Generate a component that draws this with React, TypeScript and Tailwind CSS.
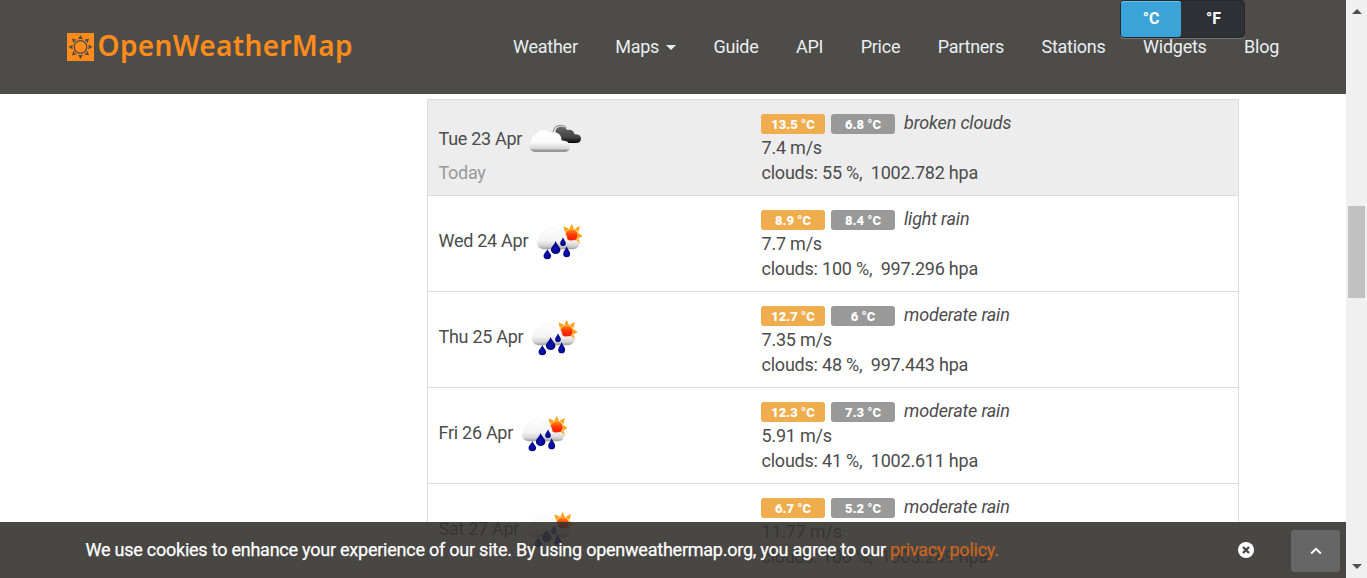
const NAV = ['Weather', 'Maps', 'Guide', 'API', 'Price', 'Partners', 'Stations', 'Widgets', 'Blog'];

type Day = {
  date: string;
  today?: boolean;
  high: string;
  low: string;
  sky: string;
  wind: string;
  clouds: string;
  pressure: string;
};

const DAYS: Day[] = [
  { date: 'Tue 23 Apr', today: true, high: '13.5', low: '6.8', sky: 'broken clouds', wind: '7.4', clouds: '55', pressure: '1002.782' },
  { date: 'Wed 24 Apr', high: '8.9', low: '8.4', sky: 'light rain', wind: '7.7', clouds: '100', pressure: '997.296' },
  { date: 'Thu 25 Apr', high: '12.7', low: '6', sky: 'moderate rain', wind: '7.35', clouds: '48', pressure: '997.443' },
  { date: 'Fri 26 Apr', high: '12.3', low: '7.3', sky: 'moderate rain', wind: '5.91', clouds: '41', pressure: '1002.611' },
  { date: 'Sat 27 Apr', high: '6.7', low: '5.2', sky: 'moderate rain', wind: '11.77', clouds: '100', pressure: '1003.249' },
];

function Gradients() {
  return (
    <svg className="absolute h-0 w-0" aria-hidden="true">
      <defs>
        <linearGradient id="cloud" x1="0" y1="0" x2="0" y2="1">
          <stop offset="0" stopColor="#ffffff" />
          <stop offset="0.55" stopColor="#fbfbfb" />
          <stop offset="0.86" stopColor="#d5d5d5" />
          <stop offset="0.94" stopColor="#999" />
          <stop offset="1" stopColor="#777" />
        </linearGradient>
        <linearGradient id="rainCloud" x1="0" y1="0" x2="0" y2="1">
          <stop offset="0" stopColor="#ffffff" />
          <stop offset="0.6" stopColor="#f4f4f4" />
          <stop offset="0.85" stopColor="#d2d2d2" />
          <stop offset="1" stopColor="#999" />
        </linearGradient>
        <linearGradient id="darkCloud" x1="0" y1="0" x2="0" y2="1">
          <stop offset="0" stopColor="#666" />
          <stop offset="0.65" stopColor="#444" />
          <stop offset="1" stopColor="#050505" />
        </linearGradient>
        <linearGradient id="sun" x1="0" y1="0" x2="0" y2="1">
          <stop offset="0" stopColor="#ff9a10" />
          <stop offset="0.45" stopColor="#ff3a08" />
          <stop offset="1" stopColor="#f01000" />
        </linearGradient>
        <radialGradient id="drop" cx="0.45" cy="0.6" r="0.6">
          <stop offset="0" stopColor="#0c12b8" />
          <stop offset="1" stopColor="#04046c" />
        </radialGradient>
      </defs>
    </svg>
  );
}

function BrokenCloudsIcon() {
  return (
    <svg viewBox="306 63 180 150" className="h-[50px] w-[60px] shrink-0">
      <path d="M384 112Q388 91 406 91Q418 90 424 99" fill="none" stroke="#999" strokeWidth="4" />
      <path d="M391 116Q389 98 406 95Q420 94 427 105Q444 102 449 118Q468 118 468 131Q467 144 453 144H430Q418 140 411 137Q406 122 391 116Z" fill="url(#darkCloud)" />
      <path d="M328 170Q313 168 313 154Q313 143 320 139Q317 123 332 120Q340 104 358 105Q370 106 377 115Q391 107 403 118Q411 126 408 137Q433 135 435 155Q435 168 421 170Z" fill="url(#cloud)" />
    </svg>
  );
}

const DROP = 'M0-1C.12-.5.95-.1.95.35A.95.65 0 0 1-.95.35C-.95-.1-.12-.5 0-1Z';

function RainIcon() {
  return (
    <svg viewBox="36 9 180 150" className="h-[50px] w-[60px] shrink-0">
      <g transform="translate(155 64)">
        <path
          d="M-7-19L0-35L7-19ZM9-20L25-28L20-9ZM19-8L33 2L19 10ZM20 9L25 25L8 20ZM-20-9L-25-27L-8-20Z"
          fill="#ffa21c"
        />
        <circle r="19" fill="url(#sun)" stroke="#ffb43c" strokeWidth="3" />
      </g>
      <path
        d="M70 106Q52 104 52 88Q51 75 62 70Q61 55 75 52Q82 39 98 40Q113 41 118 54Q132 50 138 63Q142 70 142 77Q150 82 160 79Q177 78 177 91Q176 105 160 106Z"
        fill="url(#rainCloud)"
        stroke="#e6e6e6"
        strokeWidth="1.2"
      />
      <path transform="translate(82 120) scale(12 16)" d={DROP} fill="url(#drop)" />
      <path transform="translate(107 100) scale(15 20)" d={DROP} fill="url(#drop)" />
      <path transform="translate(129 83) scale(9 13)" d={DROP} fill="url(#drop)" />
      <path transform="translate(140 113) scale(11 17)" d={DROP} fill="url(#drop)" />
    </svg>
  );
}

function Logo() {
  return (
    <svg viewBox="0 0 290 50" className="mt-[22px] ml-[67px] h-[50px] w-[290px] shrink-0">
      <rect x="0" y="11" width="27" height="28" fill="#ff8c1a" />
      <g transform="translate(13.5 25)">
        <circle r="6.3" fill="none" stroke="#4e4c48" strokeWidth="1.3" />
        {[0, 45, 90, 135, 180, 225, 270, 315].map((a) => (
          <path key={a} transform={`rotate(${a})`} d="M-2.5-7.7Q0-8.5 2.5-7.7L0-12Z" fill="#4e4c48" />
        ))}
      </g>
      <text x="30.5" y="33.5" textLength="255" fill="#ff8c1a" className="font-['Noto_Sans'] text-[28px] font-semibold">
        OpenWeatherMap
      </text>
    </svg>
  );
}

function Header() {
  return (
    <header className="absolute inset-x-0 top-0 flex h-[94px] bg-[#4e4c48]">
      <Logo />
      <nav className="ml-[156px] flex h-[92px] items-center gap-[37.45px] text-[18px] tracking-[-0.25px] text-[#e9eef2]">
        {NAV.map((item) => (
          <a key={item} className="flex items-center">
            {item}
            {item === 'Maps' && (
              <span className="mt-[3px] ml-[7px] border-x-[5px] border-t-[5px] border-x-transparent border-t-[#e9eef2]" />
            )}
          </a>
        ))}
      </nav>
      <div className="absolute top-0 left-[1120px] flex h-[38px] w-[125px] rounded-[4px] border border-[#25272b] bg-[#2d3035] text-[16px] leading-[36px] font-bold text-white shadow-[0_1px_0_#77757a]">
        <span className="w-[60px] rounded-[3px] bg-[#3aa3d8] text-center shadow-[inset_0_1px_0_#6cc0e8]">°C</span>
        <span className="flex-1 pl-[2px] text-center">°F</span>
      </div>
    </header>
  );
}

function Row({ day }: { day: Day }) {
  return (
    <div className={`flex h-[96px] shrink-0 border-b border-[#ddd] ${day.today ? 'bg-[#ededed]' : 'bg-white'}`}>
      <div className="flex w-[333px] flex-col pl-[10.5px] tracking-[-0.28px]">
        <div className={`flex items-start ${day.today ? 'mt-[16px] gap-[4.5px]' : 'mt-[21px] gap-[3.5px]'}`}>
          <span className={day.today ? 'mt-[10px]' : 'mt-[11px]'}>{day.date}</span>
          {day.today ? <BrokenCloudsIcon /> : <RainIcon />}
        </div>
        {day.today && <span className="mt-[-6px] text-[#999]">Today</span>}
      </div>
      <div className="pt-[10px]">
        <div className="flex h-[25px]">
          <span className="mt-[4px] h-[20px] w-[64px] rounded-[3px] bg-[#f0ad4e] text-center text-[13px] leading-[21px] font-black tracking-normal text-white">
            {day.high} °C
          </span>
          <span className="mt-[4px] ml-[6px] h-[20px] w-[64px] rounded-[3px] bg-[#999] text-center text-[13px] leading-[21px] font-black tracking-normal text-white">
            {day.low} °C
          </span>
          <i className="ml-[9px] tracking-[-0.16px]">{day.sky}</i>
        </div>
        <div className="pl-[0.5px]">{day.wind} m/s</div>
        <div className="pl-[0.5px] whitespace-pre">{`clouds: ${day.clouds} %,  ${day.pressure} hpa`}</div>
      </div>
    </div>
  );
}

function CookieBar() {
  return (
    <footer className="absolute inset-x-0 bottom-0 flex h-[56px] items-center bg-[#353330]/90 text-[18px] text-white">
      <p className="mt-[-2px] ml-[85.5px] w-[1152.5px] tracking-[-0.235px] whitespace-nowrap [-webkit-text-stroke:0.25px]">
        We use cookies to enhance your experience of our site. By using openweathermap.org, you agree to our{' '}
        <a className="text-[#c9661f]">privacy policy.</a>
      </p>
      <svg viewBox="0 0 16 16" className="mt-[-1px] h-[16px] w-[16px]">
        <circle cx="8" cy="8" r="8" fill="#fff" />
        <path d="M5 5L11 11M11 5L5 11" stroke="#484644" strokeWidth="2.4" />
      </svg>
      <button className="mt-[2px] ml-[37px] flex h-[42px] w-[49px] items-center justify-center rounded-[3px] bg-[#666]">
        <svg viewBox="0 0 12 8" className="h-[8px] w-[12px]">
          <path d="M1.2 6.5L6 1.8L10.8 6.5" fill="none" stroke="#fff" strokeWidth="2" />
        </svg>
      </button>
    </footer>
  );
}

function Scrollbar() {
  return (
    <div className="flex h-full w-[21px] flex-col items-center bg-[#f0f0f0]">
      <svg viewBox="0 0 10 5" className="mt-[9px] h-[5px] w-[10px]">
        <path d="M0 5L5 0L10 5Z" fill="#505050" />
      </svg>
      <div className="mt-[192px] h-[92px] w-[17px] bg-[#c1c1c1]" />
      <svg viewBox="0 0 10 5" className="mt-auto mb-[9px] h-[5px] w-[10px]">
        <path d="M0 0H10L5 5Z" fill="#505050" />
      </svg>
    </div>
  );
}

export default function App() {
  return (
    <div className="flex h-[578px] w-[1367px] overflow-hidden bg-white font-[Roboto,sans-serif]">
      <Gradients />
      <div className="relative h-full w-[1346px] overflow-hidden">
        <main className="pt-[99px] pl-[427px]">
          <div className="w-[812px] border border-b-0 border-[#ddd] text-[18px] leading-[25px] tracking-[-0.22px] text-[#4c4c4c]">
            {DAYS.map((day) => (
              <Row key={day.date} day={day} />
            ))}
          </div>
        </main>
        <Header />
        <CookieBar />
      </div>
      <Scrollbar />
    </div>
  );
}
